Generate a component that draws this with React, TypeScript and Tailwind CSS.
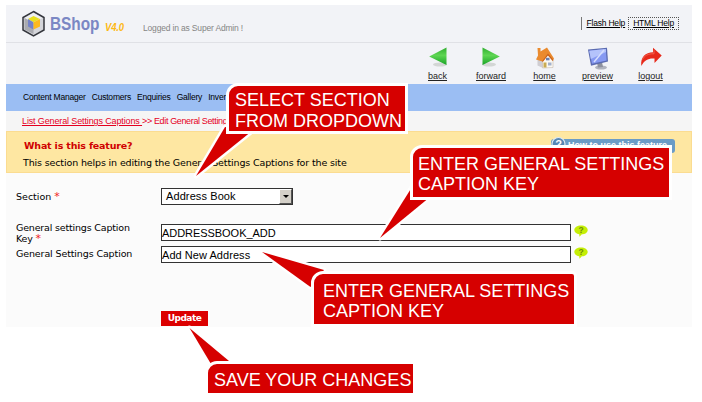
import type { ReactNode } from "react";

const sans = "font-['Liberation_Sans',Arial,sans-serif]";
const verdana = "font-['DejaVu_Sans',Verdana,sans-serif]";

function Logo() {
  return (
    <svg width="24" height="28" viewBox="0 0 24 28" className="shrink-0">
      <polygon points="11.500,1.500 22,7.500 22,20 11.500,26 1,20 1,7.500" fill="#d4d5da" stroke="#34363d" strokeWidth="1.5" />
      <polygon points="11.500,3 20.500,8 11.500,13 2.500,8" fill="#eeeff2" />
      <polygon points="2.500,8 11.500,13 11.500,24 2.500,19.400" fill="#a9aab0" />
      <polygon points="11.500,6 18,9 11.500,12.300 6,9" fill="#e8e01f" />
      <polygon points="6,9 11.500,12.300 11.500,19.500 6,16.500" fill="#7482c8" />
      <polygon points="18,9 11.500,12.300 11.500,19.500 18,16.500" fill="#fdb91c" />
    </svg>
  );
}

function Arrow({ flip }: { flip?: boolean }) {
  return (
    <svg width="20" height="22" viewBox="0 0 20 22" className={flip ? "-scale-x-100" : ""}>
      <defs>
        <linearGradient id="green" x1="0" y1="0" x2="0" y2="1">
          <stop offset="0" stopColor="#2fae2f" />
          <stop offset="0.45" stopColor="#5fd653" />
          <stop offset="1" stopColor="#18a326" />
        </linearGradient>
      </defs>
      <ellipse cx="8" cy="17.500" rx="7" ry="2" fill="#d3d6d5" />
      <polygon points="1.500,0.500 18.800,9.500 1.500,18" fill="url(#green)" />
    </svg>
  );
}

function Home() {
  return (
    <svg width="20" height="22" viewBox="0 0 20 22">
      <polygon points="2.500,10 8,5 18,11 18,20 9,21.500 2.500,18" fill="#eff0f5" />
      <polygon points="2.500,11 8,13 8,21 2.500,18.500" fill="#cfcdd2" />
      <polygon points="7.500,14 13,8 18,13 18,20.500 7.500,21" fill="#fbf8f2" stroke="#c4b9ac" strokeWidth=".6" />
      <path d="M2.500 1h3v3.500L12 .5 19 11.500l-1 2-5-6-5.500 7L1 12.500l2-4z" fill="#ea8a2e" />
      <path d="M7.500 14.500 13 7.500l5 6" fill="none" stroke="#c9611a" strokeWidth="1.200" />
      <rect x="11" y="10.800" width="3.500" height="2.500" fill="#6a7fb0" />
      <rect x="8.500" y="15.500" width="3" height="5" fill="#c9ab52" />
      <rect x="13" y="15.500" width="3.500" height="3" fill="#a3b0cc" />
    </svg>
  );
}

function Monitor() {
  return (
    <svg width="22" height="24" viewBox="0 0 22 24">
      <ellipse cx="14" cy="20.500" rx="6" ry="2" fill="#b0b3be" />
      <polygon points="10,16 15,15 16,20 11,20.500" fill="#8d919e" />
      <polygon points="1,2.500 20,.7 21,14.500 4,18.800" fill="#5b6bb0" />
      <polygon points="2.300,3.700 18.800,2 19.600,13.400 5,16.800" fill="#8699f2" />
      <polygon points="2.300,3.700 18.800,2 19,5 3.800,12" fill="#b4c3fb" />
      <path d="m7 15 10-12" stroke="#d5defe" strokeWidth="1.5" />
    </svg>
  );
}

function Logout() {
  return (
    <svg width="22" height="22" viewBox="0 0 22 22">
      <path d="M1.300 19C.3 10 5.500 5.300 13 5.300V.8L21.700 8.500 14.500 16v-4.500C8.500 11 4.500 13 1.300 19z" fill="#e7291a" />
      <path d="M2.500 12.500C4.500 8.500 8 6.600 14 6.800V3.200" fill="none" stroke="#f2604c" strokeWidth="1" />
    </svg>
  );
}

function Bubble() {
  return (
    <svg width="14" height="12" viewBox="0 0 14 12">
      <path d="M7 .5c3.800 0 6.700 1.900 6.700 4.400S10.800 9.300 7.800 9.300L5.500 11.700 5.200 9.200C2.400 8.800.3 7.100.3 4.900.3 2.400 3.200.5 7 .5z" fill="#c5ee05" />
      <text x="7" y="8" textAnchor="middle" fontSize="8.500" fontWeight="700" fill="#6f8d0c" fontFamily="Liberation Sans, sans-serif">?</text>
    </svg>
  );
}

function Tool({ label, width, children }: { label: string; width: string; children: ReactNode }) {
  return (
    <div className={`flex flex-col items-center ${width}`}>
      <div className="flex h-[24px] items-start justify-center">{children}</div>
      <span className="text-[9px] leading-[11px] text-[#222] underline">{label}</span>
    </div>
  );
}

function Tail({ points }: { points: string }) {
  return (
    <>
      <polygon points={points} fill="#fff" stroke="#fff" strokeWidth="5" strokeLinejoin="round" />
      <polygon points={points} fill="#d60000" />
    </>
  );
}

const callout = `absolute box-content border-[3px] border-white bg-[#d60000] text-white whitespace-nowrap ${sans} text-[18px] leading-5`;

export default function App() {
  return (
    <div className="relative h-[402px] w-[702px] overflow-hidden bg-white pt-[5px] pl-[6px]">
      <div className={`flex h-[322px] w-[686px] flex-col bg-[#fbfbfb] text-black ${sans}`}>
        <header className="flex h-[38px] shrink-0 border-b border-[#e0e1e6] bg-[#f2f3f7]">
          <div className="flex pt-[5px] pl-[16px] whitespace-nowrap">
            <Logo />
            <span className="ml-[4px] w-[50px] origin-left scale-x-[0.83] pt-[2px] text-[18.5px] leading-[24px] font-bold text-[#7b87c4]">BShop</span>
            <span className="ml-[5px] w-[20px] origin-left scale-x-[0.86] pt-[9px] text-[11px] leading-[16px] font-bold tracking-[-0.2px] text-[#fdb813] italic">V4.0</span>
            <span className="ml-[18px] pt-[12px] text-[8.5px] leading-[12px] tracking-[-0.17px] text-[#858585]">Logged in as Super Admin !</span>
          </div>
          <div className="mt-[12px] mr-[13px] ml-auto flex h-[13px] text-[8.5px] leading-[12px] tracking-[-0.2px]">
            <span className="border-l border-[#777] pl-[4px] underline">Flash Help</span>
            <span className="ml-[3px] h-[13px] border border-dotted border-[#555] pr-[4px] pl-[4px] leading-[11px] underline">HTML Help</span>
          </div>
        </header>

        <div className="flex h-[41px] shrink-0 justify-end bg-[#f2f3f7] pt-[4px] pr-[15px]">
          <Tool label="back" width="w-[53px]"><Arrow flip /></Tool>
          <Tool label="forward" width="w-[54px]"><Arrow /></Tool>
          <Tool label="home" width="w-[53px]"><Home /></Tool>
          <Tool label="preview" width="w-[53px]"><Monitor /></Tool>
          <Tool label="logout" width="w-[53px]"><Logout /></Tool>
        </div>

        <nav className="flex h-[27px] shrink-0 items-center gap-[6px] bg-[#9bbef3] pl-[17px] text-[8.5px] tracking-[-0.2px] whitespace-nowrap">
          <span>Content Manager</span><span>Customers</span><span>Enquiries</span><span>Gallery</span><span>Inventory</span>
        </nav>

        <div className="flex h-5 shrink-0 items-center bg-[#f5f5f5] pt-[2px] pl-[16px] text-[9px] whitespace-pre text-[#e5001f]">
          <span className="tracking-[-0.13px] underline">List General Settings Captions </span><span className="tracking-[-0.36px]">&gt;&gt; Edit General Settings</span>
        </div>

        <section className={`flex h-[42px] shrink-0 border border-[#fbdc91] bg-[#fee7a2] pl-[16px] ${verdana}`}>
          <div className="whitespace-nowrap">
            <h1 className="mt-[7px] ml-[1px] text-[9.5px] leading-[13px] font-bold tracking-[-0.18px] text-[#d00000]">What is this feature?</h1>
            <p className="mt-[4px] text-[9.5px] leading-[13px] tracking-[-0.135px]">This section helps in editing the General Settings Captions for the site</p>
          </div>
          <div className="mt-[7px] mr-[16px] ml-auto flex h-[14px] w-[124px] rounded-[3px] bg-[#6b9cc6]">
            <svg width="16" height="16" viewBox="0 0 16 16" className="-mt-[3px]">
              <circle cx="7.500" cy="8" r="6.500" fill="#5686b4" stroke="#dfeaf2" strokeWidth="1.200" />
              <text x="7.500" y="12" textAnchor="middle" fontSize="11" fontWeight="700" fill="#fff" fontFamily="Liberation Sans, sans-serif">?</text>
            </svg>
            <span className={`pt-px pl-px text-[9px] leading-[11px] font-bold whitespace-nowrap text-white ${sans}`}>How to use this feature</span>
          </div>
        </section>

        <main className={`grid grid-cols-[146px_410px_1fr] grid-rows-[51px_22px_65px_16px] pt-[15px] pl-[9px] ${verdana} text-[9.5px] leading-[11px]`}>
          <label className="pt-[3px] pl-px whitespace-nowrap">Section <span className="text-[11px] text-[#f02020]">*</span></label>
          <div className={`mt-0 flex h-[17px] w-[132px] border border-[#333] bg-white pl-[4px] text-[11px] leading-[15px] tracking-[0.1px] ${sans}`}>
            <span className="grow">Address Book</span>
            <span className="flex w-[13px] items-center justify-center border border-[#fff] border-r-[#555] border-b-[#555] bg-[#d4d0c8]">
              <span className="h-0 w-0 border-x-[3px] border-t-[3px] border-x-transparent border-t-black" />
            </span>
          </div>
          <span />

          <label className="-mt-[17px] pl-px tracking-[-0.18px] whitespace-nowrap">General settings Caption<br />Key <span className="text-[11px] text-[#f02020]">*</span></label>
          <div className={`-mt-[15px] h-[17px] border border-[#333] bg-white text-[11px] leading-[16px] tracking-[-0.05px] ${sans}`}>ADDRESSBOOK_ADD</div>
          <span className="-mt-[14px] pl-[3px]"><Bubble /></span>

          <label className="-mt-[15px] pt-[2px] pl-px tracking-[-0.12px] whitespace-nowrap">General Settings Caption</label>
          <div className={`-mt-[15px] h-[17px] border border-[#333] bg-white text-[11px] leading-[16px] tracking-[0.05px] ${sans}`}>Add New Address</div>
          <span className="-mt-[14px] pl-[3px]"><Bubble /></span>

          <span />
          <button className="-mt-[15px] h-[15px] w-[47px] bg-[#dc0000] text-[9px] leading-[15px] font-bold tracking-[-0.5px] text-white">Update</button>
        </main>
      </div>

      <svg width="702" height="402" className="absolute top-0 left-0">
        <Tail points="196,176 225,127 252,131" />
        <Tail points="380,238 412,187 430,197" />
        <Tail points="262,252 324,270 310.500,287" />
        <Tail points="189.500,328 229,361 211,364" />
      </svg>
      <div className={`${callout} top-[83px] left-[226px] h-[45px] w-[176px] rounded-tl-[12px] pt-0`}>
        <p className="mt-[4px] ml-[6px] leading-[20.5px]"><span>SELECT SECTION</span><br /><span>FROM DROPDOWN</span></p>
      </div>
      <div className={`${callout} top-[145px] left-[410px] h-[49px] w-[256px] rounded-tl-[12px]`}>
        <p className="mt-[6px] ml-[5px]"><span>ENTER GENERAL SETTINGS</span><br /><span>CAPTION KEY</span></p>
      </div>
      <div className={`${callout} top-[271px] left-[311px] h-[50px] w-[260px] rounded-tl-[12px] rounded-tr-[5px]`}>
        <p className="mt-[7px] ml-[9px]"><span>ENTER GENERAL SETTINGS</span><br /><span>CAPTION KEY</span></p>
      </div>
      <div className={`${callout} top-[361px] left-[205px] h-[29px] w-[205px] rounded-tl-[12px]`}>
        <p className="mt-[6px] ml-[6px]">SAVE YOUR CHANGES</p>
      </div>
    </div>
  );
}
